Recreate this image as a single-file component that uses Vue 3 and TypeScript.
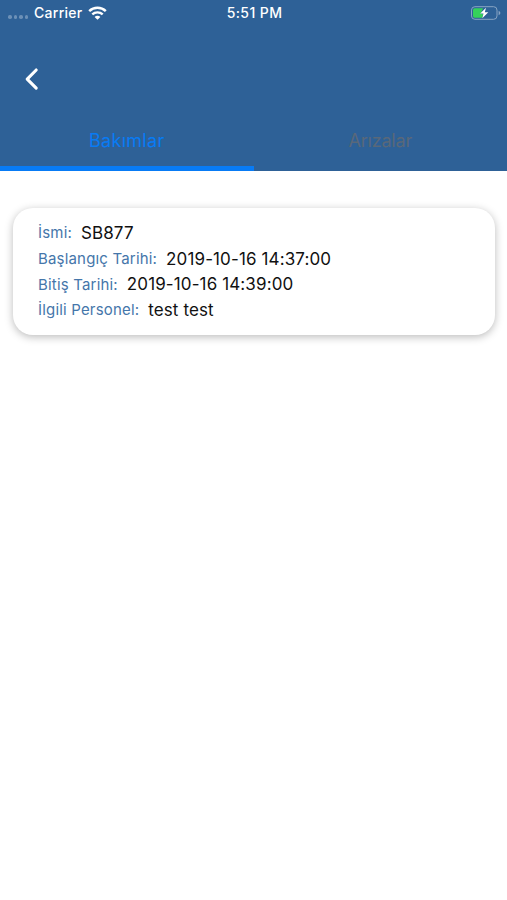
<script setup lang="ts">
import { ref } from 'vue'

interface Field {
  label: string
  value: string
}

const tabs: string[] = ['Bakımlar', 'Arızalar']
const active = ref(0)

const fields: Field[] = [
  { label: 'İsmi:', value: 'SB877' },
  { label: 'Başlangıç Tarihi:', value: '2019-10-16 14:37:00' },
  { label: 'Bitiş Tarihi:', value: '2019-10-16 14:39:00' },
  { label: 'İlgili Personel:', value: 'test test' },
]
</script>

<template>
  <div class="screen">
    <header class="header">
      <div class="status">
        <div class="carrier">
          <span class="dots"><i v-for="n in 4" :key="n"></i></span>
          <span class="carrier-name">Carrier</span>
          <svg class="wifi" width="19" height="14" viewBox="0 0 19 14" fill="none" stroke="#fff">
            <path d="M1.2 5.1C5.8.7 13.2.7 17.8 5.1" stroke-width="2.5" />
            <path d="M4.3 8.4C7.2 5.7 11.8 5.7 14.7 8.4" stroke-width="2.4" />
            <path d="M9.5 13.8 6.6 10.9C8.2 9.4 10.8 9.4 12.4 10.9Z" fill="#fff" stroke="none" />
          </svg>
        </div>
        <span class="time">5:51 PM</span>
        <svg class="battery" width="31" height="14" viewBox="0 0 31 14">
          <rect x="1.5" y=".7" width="25.5" height="12.6" rx="3.4" fill="none" stroke="#89a5c4" stroke-width="1" />
          <path d="M4.6 2.3H13L10.7 8H13L12.3 11.7H4.6Q3 11.7 3 10V4Q3 2.3 4.6 2.3Z" fill="#35d15b" />
          <path d="M16 1.8 10.2 7.6H13.5L12.3 12.2 18.3 6.3H14.8Z" fill="#fff" />
          <path d="M28.6 4.8Q30.4 5.5 30.4 7T28.6 9.2Z" fill="#89a5c4" />
        </svg>
      </div>
      <button class="back" aria-label="Geri">
        <svg width="16" height="24" viewBox="0 0 16 24">
          <path d="M12.2 3 3.2 12.1 12.2 21.2" fill="none" stroke="#fff" stroke-width="3.1" stroke-linecap="round" stroke-linejoin="round" />
        </svg>
      </button>
      <nav class="tabs">
        <button v-for="(tab, i) in tabs" :key="tab" class="tab" :class="{ active: active === i }" @click="active = i">
          {{ tab }}
        </button>
      </nav>
    </header>
    <main class="content">
      <article class="card">
        <div v-for="field in fields" :key="field.label" class="row">
          <span class="label">{{ field.label }}</span>
          <span class="value">{{ field.value }}</span>
        </div>
      </article>
    </main>
  </div>
</template>

<style>
body {
  background: #fff;
}
</style>

<style scoped>
.screen {
  height: 900px;
  overflow: hidden;
  background: #fff;
  font-family: Inter, Roboto, sans-serif;
}
.header {
  height: 171px;
  display: flex;
  flex-direction: column;
  background: #2e6197;
}
.status {
  height: 26px;
  padding: 0 6px 0 8px;
  display: grid;
  grid-template-columns: 1fr auto 1fr;
  align-items: center;
  color: #fff;
  font-size: 14px;
  font-weight: 500;
  line-height: 26px;
}
.carrier {
  display: flex;
  align-items: center;
}
.dots {
  width: 26px;
  padding-top: 8px;
  display: flex;
  gap: 2px;
}
.dots i {
  width: 3.5px;
  height: 3.5px;
  border-radius: 50%;
  background: #6c90b7;
}
.carrier-name {
  letter-spacing: 0.28px;
}
.time {
  letter-spacing: 0.4px;
}
.wifi {
  margin-left: 5px;
}
.battery {
  justify-self: end;
}
button {
  margin: 0;
  padding: 0;
  border: 0;
  background: none;
  font: inherit;
}
.back {
  width: 16px;
  height: 24px;
  margin: 41px 0 0 24px;
}
.back svg {
  display: block;
}
.tabs {
  flex: 1;
  margin-top: 30px;
  display: grid;
  grid-template-columns: 1fr 1fr;
}
.tab {
  border-bottom: 5px solid transparent;
  padding-bottom: 6px;
  color: #59687a;
  font-size: 18px;
  letter-spacing: -0.2px;
  line-height: 24px;
}
.tab.active {
  color: #087bf5;
  border-color: #087bf5;
  letter-spacing: 0.3px;
}
.content {
  padding: 37px 12px 0 13px;
}
.card {
  height: 127px;
  box-sizing: border-box;
  padding: 12px 25px;
  border-radius: 20px;
  background: #fff;
  box-shadow: 0 2px 8px rgba(0, 0, 0, 0.27);
}
.row {
  height: 25.7px;
  display: flex;
  align-items: center;
  gap: 9px;
  white-space: nowrap;
}
.label {
  color: #4576aa;
  font-size: 15px;
  letter-spacing: 0.18px;
}
.value {
  color: #111;
  font-size: 17px;
  letter-spacing: 0.12px;
}
</style>
